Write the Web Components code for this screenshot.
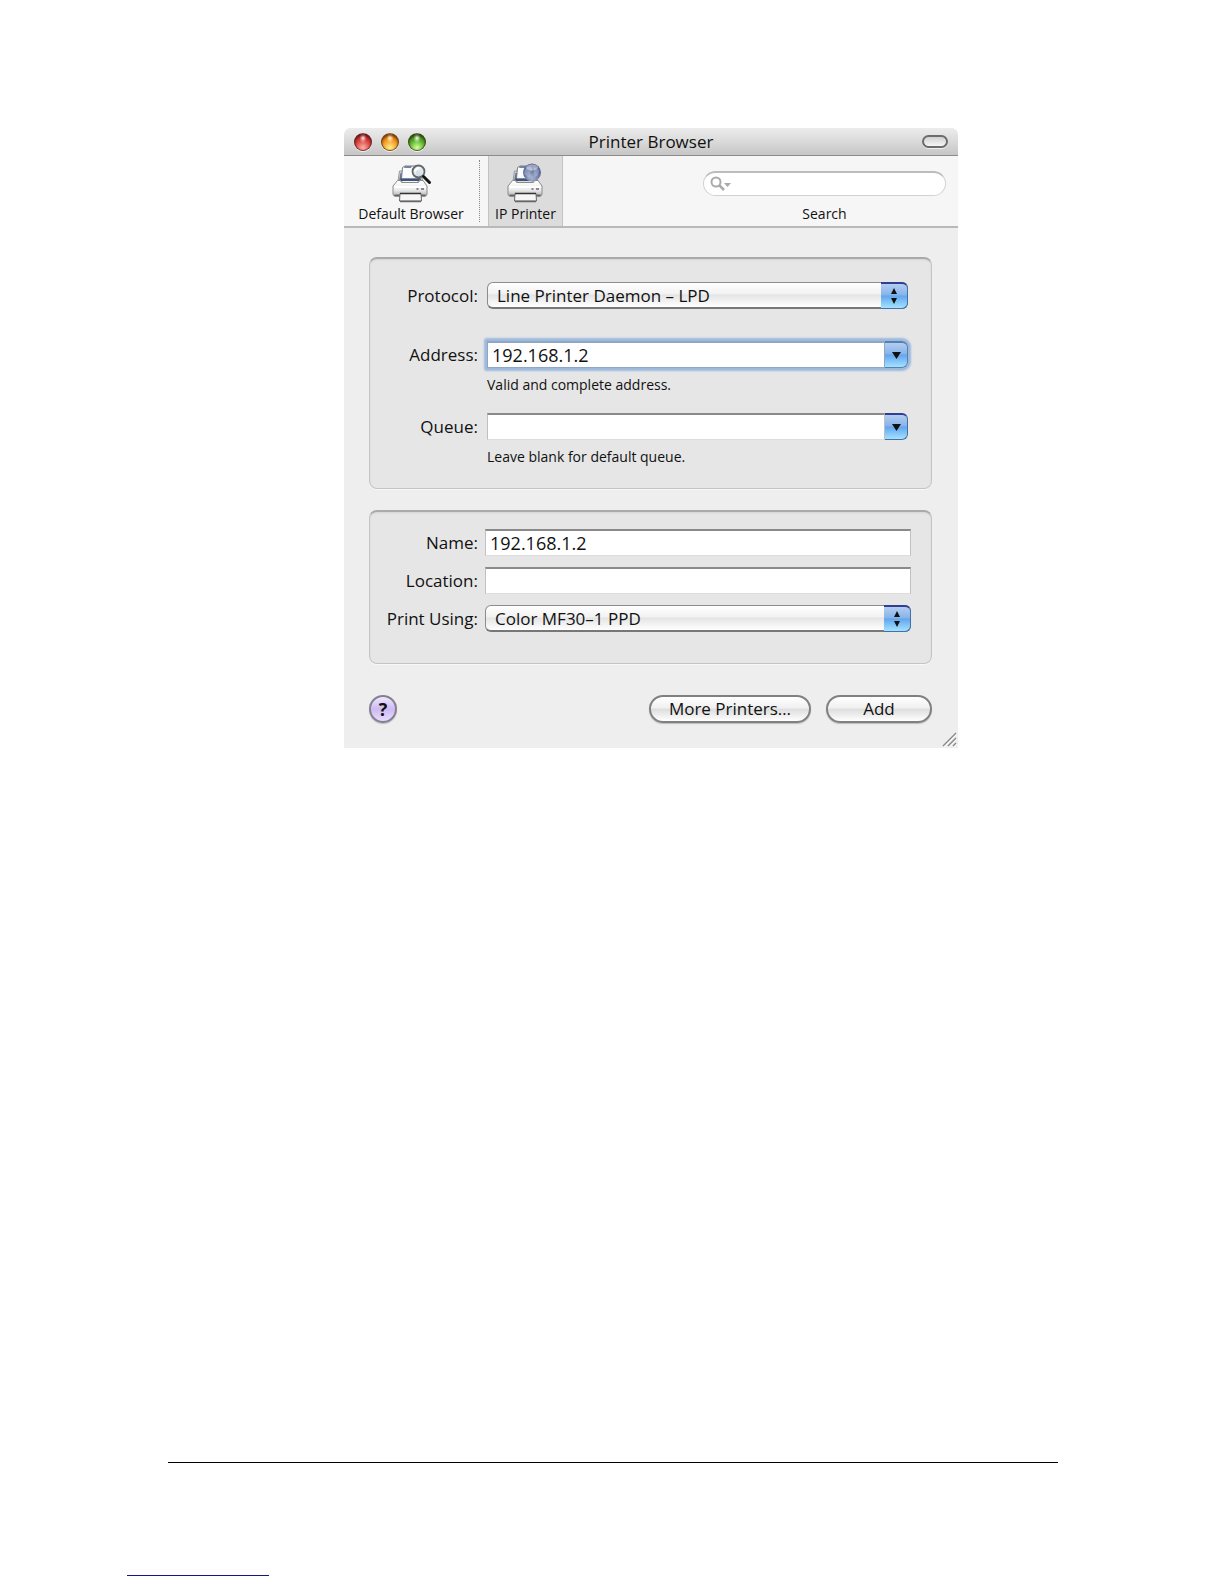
<!DOCTYPE html>
<html lang="en">
<head>
<meta charset="utf-8">
<meta name="viewport" content="width=device-width, initial-scale=1">
<title>Printer Browser</title>
<style>
  body {
    margin: 0;
    min-height: 100vh;
    display: flex;
    flex-direction: column;
    background: #fff;
    color: #111;
    font-family: "Open Sans", "Noto Sans", sans-serif;
    font-size: 17px;
  }

  main {
    flex: 1;
    display: grid;
    grid-template-columns: 344fr 614fr 266fr;
    align-items: start;
    padding-top: 128px;
  }

  aqua-window {
    grid-column: 2;
  }

  .spaced {
    margin-bottom: 14px;
  }
</style>
</head>
<body>
<main>
  <aqua-window heading="Printer Browser">
    <tool-item slot="toolbar" icon="lens">Default Browser</tool-item>
    <tool-item slot="toolbar" icon="globe" active>IP Printer</tool-item>
    <tool-search slot="toolbar" label="Search"></tool-search>

    <aqua-group>
      <form-row class="spaced" label="Protocol:" type="select" value="Line Printer Daemon – LPD"></form-row>
      <form-row label="Address:" type="combo" value="192.168.1.2" hint="Valid and complete address." focused></form-row>
      <form-row label="Queue:" type="combo" hint="Leave blank for default queue."></form-row>
    </aqua-group>

    <aqua-group compact>
      <form-row label="Name:" type="text" value="192.168.1.2"></form-row>
      <form-row label="Location:" type="text"></form-row>
      <form-row label="Print Using:" type="select" value="Color MF30–1 PPD"></form-row>
    </aqua-group>

    <aqua-button slot="actions" kind="help">?</aqua-button>
    <aqua-button slot="actions" kind="wide">More Printers…</aqua-button>
    <aqua-button slot="actions">Add</aqua-button>
  </aqua-window>
</main>
<page-footer></page-footer>

<script>
  // Window frame: title bar, toolbar, content and the button row
  class AquaWindow extends HTMLElement {
    constructor() {
      super();
      this.attachShadow({ mode: "open" });
      this.shadowRoot.innerHTML = `
        <style>
          :host {
            display: block;
            position: relative;
            background: #eee;
            border-radius: 7px 7px 0 0;
            overflow: hidden;
          }

          header {
            display: grid;
            grid-template-columns: 1fr auto 1fr;
            align-items: center;
            height: 27px;
            padding: 0 10px;
            border-bottom: 1px solid #8c8c8c;
            background: linear-gradient(#ececec, #dcdcdc 45%, #c6c6c6);
          }

          h1 {
            margin: 0;
            font-size: 17px;
            font-weight: 400;
            line-height: 26px;
          }

          .lights {
            display: flex;
            gap: 9px;
          }

          .lights button {
            width: 18px;
            height: 18px;
            padding: 0;
            border: 1px solid rgba(40, 20, 20, 0.6);
            border-radius: 50%;
            box-shadow: inset 0 2px 2px rgba(50, 0, 0, 0.5), 0 1px 0 #f4f4f4;
          }

          .close {
            background: radial-gradient(ellipse at 50% 25%, #fff 0, #e99 12%, transparent 32%), radial-gradient(circle at 50% 85%, #ffb0a8, #d8403c 50%, #a01c20);
          }

          .minimize {
            background: radial-gradient(ellipse at 50% 25%, #fff 0, #fc8 12%, transparent 32%), radial-gradient(circle at 50% 85%, #fff08a, #f2981c 50%, #b4600c);
          }

          .zoom {
            background: radial-gradient(ellipse at 50% 25%, #fff 0, #ad9 12%, transparent 32%), radial-gradient(circle at 50% 85%, #d4ff9a, #55ae28 50%, #2b7410);
          }

          .pill {
            justify-self: end;
            width: 26px;
            height: 13px;
            padding: 0;
            border: 2px solid #6c6c6c;
            border-radius: 7px;
            background: linear-gradient(#d0d0d0, #f6f6f6);
            box-shadow: 0 1px 0 #eee;
          }

          nav {
            display: flex;
            height: 70px;
            border-bottom: 2px solid #b9b9b9;
            background: #f6f6f6;
          }

          .content {
            display: flex;
            flex-direction: column;
            gap: 21px;
            padding: 29px 26px 0 25px;
          }

          footer {
            display: flex;
            align-items: center;
            gap: 15px;
            padding: 31px 26px 25px 25px;
          }

          .grip {
            position: absolute;
            right: 1px;
            bottom: 1px;
          }
        </style>
        <header>
          <div class="lights">
            <button class="close" aria-label="Close"></button>
            <button class="minimize" aria-label="Minimize"></button>
            <button class="zoom" aria-label="Zoom"></button>
          </div>
          <h1></h1>
          <button class="pill" aria-label="Toggle toolbar"></button>
        </header>
        <nav><slot name="toolbar"></slot></nav>
        <div class="content"><slot></slot></div>
        <footer><slot name="actions"></slot></footer>
        <svg class="grip" width="15" height="15" viewBox="0 0 15 15" aria-hidden="true">
          <path d="M2 15 15 2M7 15l8-8M12 15l3-3" stroke="#fff" fill="none"/>
          <path d="M1 14 14 1M6 14l8-8M11 14l3-3" stroke="#888" stroke-width="1.4" fill="none"/>
        </svg>
      `;
      this.shadowRoot.querySelector("h1").textContent = this.getAttribute("heading");
    }
  }

  const PRINTER = `
    <path d="M8 19 9.500 9h3.500v10zM27 19V9h2.500l3.500 10z" fill="#cfd3d8" stroke="#888" stroke-width="0.8"/>
    <path d="M9 19 10.500 11h19l2 8z" fill="#5d7396"/>
    <path d="M11.500 17 12.500 5.500 15 4h11l1.500 13z" fill="#fbfcfe" stroke="#777d88"/>
    <path d="M15 4h7l-1 2h-7z" fill="#75849f"/>
    <path d="M10.500 16.500h19v2.500h-19z" fill="#3f5478"/>
    <path d="M7.500 18.500h3l1 2h17l1-2h3.500l4 5.500V32q0 2-2 2H5q-2 0-2-2v-8z" fill="url(#shell)" stroke="#8a8a8a"/>
    <path d="M4.500 25h31" stroke="#fff" stroke-width="2"/>
    <path d="M26.500 27h2M31 27h3" stroke="#667" stroke-width="1.500"/>
    <path d="M4.500 33.500h31" stroke="#666" stroke-width="2"/>
    <path d="M10 31.500h21l.5 7.500H9.500z" fill="#f6f6f6" stroke="#666"/>
    <path d="M10 31.500h21" stroke="#333" stroke-width="1.500"/>
    <path d="M10 39.500h21" stroke="#666" stroke-width="1.500"/>`;

  const BADGES = {
    lens: `
      <circle cx="28.500" cy="9.500" r="6" fill="#dfe8ee" fill-opacity="0.9" stroke="#666" stroke-width="1.800"/>
      <path d="M25 9.500q1-3.500 4.500-3.500" stroke="#fff" stroke-width="2" fill="none"/>
      <path d="m33.500 14.500 6 6" stroke="#151515" stroke-width="3" stroke-linecap="round"/>`,
    globe: `
      <circle cx="27" cy="10.500" r="9" fill="url(#sea)"/>
      <path d="M20 8q3-5 6-3l2 3-3 2 1 4-3 3q-1-4-4-5zM29 5l5 3-1 5-3 2-1-4z" fill="#c8d2e8" fill-opacity="0.4"/>
      <ellipse cx="27" cy="5.500" rx="6" ry="3" fill="#fff" fill-opacity="0.4"/>`
  };

  class ToolItem extends HTMLElement {
    constructor() {
      super();
      this.attachShadow({ mode: "open" });
      this.shadowRoot.innerHTML = `
        <style>
          :host {
            display: flex;
          }

          :host([active])::before {
            content: "";
            margin: 4px 8px 4px 1px;
            border-left: 1px dotted #888;
          }

          button {
            display: flex;
            flex-direction: column;
            align-items: center;
            box-sizing: border-box;
            min-width: 134px;
            height: 70px;
            padding: 6px 5px 2px;
            border: 0;
            background: none;
            color: inherit;
            font-family: inherit;
            font-size: 14px;
            line-height: 20px;
            white-space: nowrap;
          }

          :host([active]) button {
            min-width: 75px;
            border: solid #c3c3c3;
            border-width: 0 1px;
            background: #dcdcdc;
          }
        </style>
        <button>
          <svg width="42" height="42" viewBox="0 0 42 42" aria-hidden="true">
            <defs>
              <linearGradient id="shell" x2="0" y2="1">
                <stop stop-color="#fff"/><stop offset="0.6" stop-color="#ececec"/><stop offset="1" stop-color="#b4b4b4"/>
              </linearGradient>
              <radialGradient id="sea" cy="0.8">
                <stop stop-color="#a6b4d6"/><stop offset="1" stop-color="#5d6b96"/>
              </radialGradient>
            </defs>
            ${PRINTER}
            ${BADGES[this.getAttribute("icon")]}
          </svg>
          <span><slot></slot></span>
        </button>
      `;
    }
  }

  class ToolSearch extends HTMLElement {
    constructor() {
      super();
      this.attachShadow({ mode: "open" });
      this.shadowRoot.innerHTML = `
        <style>
          :host {
            display: flex;
            flex-direction: column;
            flex: 0 1 243px;
            min-width: 0;
            margin-left: auto;
            padding: 15px 12px 0 0;
          }

          .field {
            display: flex;
            align-items: center;
            height: 25px;
            margin-bottom: 8px;
            padding: 0 10px 0 6px;
            box-sizing: border-box;
            border: 1px solid #d2d2d2;
            border-top: 2px solid #bcbcbc;
            border-radius: 13px;
            background: #fff;
          }

          svg {
            flex: none;
          }

          input {
            flex: 1;
            min-width: 0;
            border: 0;
            outline: 0;
            background: none;
            font: inherit;
          }

          label {
            font-size: 14px;
            line-height: 20px;
            text-align: center;
          }
        </style>
        <div class="field">
          <svg width="22" height="16" viewBox="0 0 22 16" aria-hidden="true">
            <circle cx="6" cy="6" r="4.5" fill="none" stroke="#aaa" stroke-width="2"/>
            <path d="m9 9 5 5" stroke="#aaa" stroke-width="2.5"/>
            <path d="M14 7h7l-3.500 4z" fill="#aaa"/>
          </svg>
          <input id="query" type="text">
        </div>
        <label for="query"></label>
      `;
      this.shadowRoot.querySelector("label").textContent = this.getAttribute("label");
    }
  }

  class AquaGroup extends HTMLElement {
    constructor() {
      super();
      this.attachShadow({ mode: "open" });
      this.shadowRoot.innerHTML = `
        <style>
          :host {
            --row-gap: 9px;
            display: flex;
            flex-direction: column;
            gap: 18px;
            padding: 23px 23px 21px 0;
            border: 1px solid #c4c4c4;
            border-top: 2px solid #aaa;
            border-radius: 8px;
            background: #e6e6e6;
            box-shadow: 0 1px 0 #f8f8f8, inset 0 1px 2px rgba(0, 0, 0, 0.08);
          }

          :host([compact]) {
            --row-gap: 7px;
            gap: 11px;
            padding: 17px 20px 31px 0;
          }
        </style>
        <slot></slot>
      `;
    }
  }

  // One labelled control: a pop-up menu, a combo box or a text field
  class FormRow extends HTMLElement {
    constructor() {
      super();
      this.attachShadow({ mode: "open" });
      this.shadowRoot.innerHTML = `
        <style>
          :host {
            display: grid;
            grid-template-columns: 108px 1fr;
            column-gap: var(--row-gap);
          }

          label {
            line-height: 27px;
            text-align: right;
            white-space: nowrap;
          }

          .control {
            position: relative;
            display: flex;
            height: 27px;
          }

          select,
          input {
            flex: 1;
            min-width: 0;
            box-sizing: border-box;
            margin: 0;
            outline: 0;
            color: inherit;
            font: inherit;
          }

          select {
            appearance: none;
            padding: 0 34px 0 9px;
            border: 1px solid #8c8c8c;
            border-bottom: 2px solid #777;
            border-radius: 6px;
            background: linear-gradient(#fff, #f2f2f2 45%, #e4e4e4 50%, #fff);
          }

          input {
            padding: 0 4px;
            border: 1px solid #c0c0c0;
            border-top: 2px solid #8a8a8a;
            border-bottom-color: #ddd;
            background: #fff;
            font-size: 18px;
          }

          .cap {
            display: flex;
            align-items: center;
            justify-content: center;
            box-sizing: border-box;
            padding: 0;
            border: 1px solid #4470a8;
            border-top: 2px solid #2f3f94;
            border-left: 0;
            border-radius: 0 6px 6px 0;
            background: linear-gradient(#b4cdf0, #86b4ea 45%, #62a6ee 50%, #a4e2ff);
          }

          span.cap {
            position: absolute;
            top: 0;
            right: 0;
            width: 27px;
            height: 27px;
            pointer-events: none;
          }

          button.cap {
            width: 23px;
          }

          :host([focused]) .control {
            box-shadow: 0 0 2px 3px #9db9dc;
            border-radius: 1px 6px 6px 1px;
          }

          :host([focused]) input {
            border-color: #8fa6c4;
          }

          :host([focused]) .cap {
            border-color: #5580b4;
          }

          .hint {
            grid-column: 2;
            margin: 7px 0 0;
            font-size: 14px;
            line-height: 20px;
          }
        </style>
        <label for="field"></label>
        <div class="control"></div>
      `;
      this.render();
    }

    render() {
      const label = this.getAttribute("label");
      const type = this.getAttribute("type");
      const value = this.getAttribute("value") || "";
      const control = this.shadowRoot.querySelector(".control");
      this.shadowRoot.querySelector("label").textContent = label;

      if (type === "select") {
        control.innerHTML = `
          <select id="field"><option>${value}</option></select>
          <span class="cap">
            <svg width="8" height="18" viewBox="0 0 8 18"><path d="M4 1 7 7H1zM4 17l3-6H1z" fill="#111"/></svg>
          </span>`;
      } else {
        control.innerHTML = `<input id="field" type="text" value="${value}">`;
      }

      if (type === "combo") {
        control.insertAdjacentHTML("beforeend", `
          <button class="cap" aria-label="Show list">
            <svg width="9" height="7" viewBox="0 0 9 7"><path d="M0 0h9L4.500 7z" fill="#111"/></svg>
          </button>`);
      }

      if (this.hasAttribute("hint")) {
        const hint = document.createElement("p");
        hint.className = "hint";
        hint.textContent = this.getAttribute("hint");
        this.shadowRoot.appendChild(hint);
      }
    }
  }

  class AquaButton extends HTMLElement {
    constructor() {
      super();
      this.attachShadow({ mode: "open" });
      this.shadowRoot.innerHTML = `
        <style>
          :host {
            display: block;
          }

          :host([kind="help"]) {
            margin-right: auto;
          }

          button {
            display: block;
            box-sizing: border-box;
            min-width: 106px;
            height: 28px;
            padding: 0 16px;
            border: 2px solid #808080;
            border-radius: 14px;
            background: linear-gradient(#fff, #f0f0f0 45%, #dedede 52%, #fff);
            box-shadow: 0 1px 1px #bbb;
            color: inherit;
            font: inherit;
            line-height: 22px;
            white-space: nowrap;
          }

          :host([kind="wide"]) button {
            min-width: 162px;
          }

          :host([kind="help"]) button {
            min-width: 0;
            width: 28px;
            padding: 0;
            border-color: #85808f;
            background: linear-gradient(#efe8ff, #cdb9f4 50%, #e8dcff);
            font-size: 18px;
            font-weight: 700;
          }
        </style>
        <button><slot></slot></button>
      `;
    }
  }

  // Rules at the foot of the page
  class PageFooter extends HTMLElement {
    constructor() {
      super();
      this.attachShadow({ mode: "open" });
      this.shadowRoot.innerHTML = `
        <style>
          :host {
            display: block;
            padding-bottom: 8px;
          }

          hr {
            margin: 0 166px 112px 168px;
            border: 0;
            border-top: 1px solid #000;
          }

          .short {
            width: 142px;
            margin: 0 0 0 127px;
            border-color: #14149a;
          }
        </style>
        <hr>
        <hr class="short">
      `;
    }
  }

  customElements.define("aqua-window", AquaWindow);
  customElements.define("tool-item", ToolItem);
  customElements.define("tool-search", ToolSearch);
  customElements.define("aqua-group", AquaGroup);
  customElements.define("form-row", FormRow);
  customElements.define("aqua-button", AquaButton);
  customElements.define("page-footer", PageFooter);
</script>
</body>
</html>
